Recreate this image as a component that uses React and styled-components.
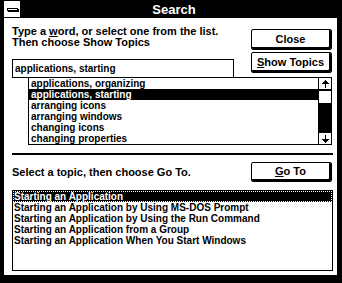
import styled, { createGlobalStyle } from "styled-components";

const GlobalStyle = createGlobalStyle`
  html, body {
    margin: 0;
    padding: 0;
    background: #fff;
  }
  body {
    font-family: "Liberation Sans", Arial, sans-serif;
    -webkit-font-smoothing: none;
  }
`;

const Window = styled.div`
  width: 342px;
  height: 283px;
  box-sizing: border-box;
  background: #000;
  padding: 0 5px 8px 4px;
  display: flex;
  flex-direction: column;
`;

const TitleBar = styled.div`
  height: 18px;
  flex-shrink: 0;
  display: flex;
`;

const SysMenu = styled.div`
  width: 16px;
  margin: 1px 0;
  background: #fff;
  display: flex;
  align-items: center;
  justify-content: center;
`;

const SysDash = styled.div`
  width: 9px;
  height: 1px;
  background: #fff;
  border: 1px solid #000;
  box-shadow: 1px 1px 0 #000;
`;

const Title = styled.div`
  flex: 1;
  color: #fff;
  font-weight: bold;
  font-size: 13px;
  display: flex;
  align-items: center;
  justify-content: center;
  padding-right: 9px;
`;

const Body = styled.div`
  flex: 1;
  background: #fff;
  padding: 8px 4px 0 8px;
  display: flex;
  flex-direction: column;
`;

const TopRow = styled.div`
  display: flex;
  justify-content: space-between;
  align-items: flex-start;
`;

const LeftCol = styled.div`
  width: 222px;
  display: flex;
  flex-direction: column;
`;

const Prompt = styled.div`
  font-size: 11px;
  font-weight: bold;
  line-height: 11px;
  white-space: nowrap;
`;

const Input = styled.div`
  margin-top: 11px;
  height: 19px;
  box-sizing: border-box;
  border: 1px solid #000;
  padding-left: 2px;
  font-size: 10px;
  font-weight: bold;
  line-height: 17px;
`;

const ButtonCol = styled.div`
  margin-top: 3px;
  margin-right: 1px;
  display: flex;
  flex-direction: column;
  gap: 2px;
`;

const Button = styled.div`
  width: 81px;
  height: ${(p) => p.$h || 21}px;
  box-sizing: border-box;
  border: 1px solid #000;
  border-radius: 2px;
  box-shadow: inset -2px -2px 0 #000;
  padding: 0 2px 2px 0;
  display: flex;
  align-items: center;
  justify-content: center;
  font-size: 11px;
  font-weight: bold;
`;

const WordList = styled.div`
  margin: -1px 0 0 16px;
  width: 304px;
  height: 68px;
  box-sizing: border-box;
  border: 1px solid #000;
  display: flex;
`;

const Rows = styled.div`
  flex: 1;
  display: flex;
  flex-direction: column;
`;

const Row = styled.div`
  height: 11px;
  flex-shrink: 0;
  padding-left: 2px;
  font-size: 10px;
  font-weight: bold;
  line-height: 11px;
  white-space: nowrap;
  background: ${(p) => (p.$selected ? "#000" : "#fff")};
  color: ${(p) => (p.$selected ? "#fff" : "#000")};
`;

const TopicRow = styled(Row)`
  padding-left: 1px;
  outline: ${(p) => (p.$focused ? "1px dotted #fff" : "none")};
  outline-offset: -1px;
`;

const ScrollBar = styled.div`
  width: 12px;
  border-left: 1px solid #000;
  display: flex;
  flex-direction: column;
  background: #000;
`;

const Arrow = styled.div`
  height: 11px;
  flex-shrink: 0;
  background: #fff;
  display: flex;
  align-items: center;
  justify-content: center;
  border-${(p) => (p.$down ? "top" : "bottom")}: 1px solid #000;
`;

const Track = styled.div`
  flex: 1;
  background: #000;
`;

const Thumb = styled.div`
  height: 12px;
  margin-top: 1px;
  background: #fff;
`;

const Separator = styled.div`
  margin-top: 8px;
  height: 2px;
  background: #000;
`;

const GoRow = styled.div`
  margin-top: 7px;
  display: flex;
  justify-content: space-between;
  align-items: center;
`;

const TopicList = styled.div`
  margin-top: 8px;
  height: 81px;
  box-sizing: border-box;
  border: 1px solid #000;
  display: flex;
  flex-direction: column;
`;

const ArrowIcon = ({ down }) => (
  <svg width="7" height="8" viewBox="0 0 7 8" style={{ transform: down ? "rotate(180deg)" : "none" }}>
    <path d="M3 0h1v1h1v1h1v1h1v1H4v4H3V4H0V3h1V2h1V1h1z" fill="#000" />
  </svg>
);

const words = [
  "applications, organizing",
  "applications, starting",
  "arranging icons",
  "arranging windows",
  "changing icons",
  "changing properties",
];

const topics = [
  "Starting an Application",
  "Starting an Application by Using MS-DOS Prompt",
  "Starting an Application by Using the Run Command",
  "Starting an Application from a Group",
  "Starting an Application When You Start Windows",
];

export default function App() {
  return (
    <>
      <GlobalStyle />
      <Window>
        <TitleBar>
          <SysMenu>
            <SysDash />
          </SysMenu>
          <Title>Search</Title>
        </TitleBar>
        <Body>
          <TopRow>
            <LeftCol>
              <Prompt>
                Type a <u>w</u>ord, or select one from the list.
                <br />
                Then choose Show Topics
              </Prompt>
              <Input>applications, starting</Input>
            </LeftCol>
            <ButtonCol>
              <Button>Close</Button>
              <Button>
                <span>
                  <u>S</u>how Topics
                </span>
              </Button>
            </ButtonCol>
          </TopRow>
          <WordList>
            <Rows>
              {words.map((w, i) => (
                <Row key={w} $selected={i === 1}>
                  {w}
                </Row>
              ))}
            </Rows>
            <ScrollBar>
              <Arrow>
                <ArrowIcon />
              </Arrow>
              <Track>
                <Thumb />
              </Track>
              <Arrow $down>
                <ArrowIcon down />
              </Arrow>
            </ScrollBar>
          </WordList>
          <Separator />
          <GoRow>
            <Prompt>Select a topic, then choose Go To.</Prompt>
            <ButtonCol style={{ marginTop: 0 }}>
              <Button $h={20}>
                <span>
                  <u>G</u>o To
                </span>
              </Button>
            </ButtonCol>
          </GoRow>
          <TopicList>
            {topics.map((t, i) => (
              <TopicRow key={t} $selected={i === 0} $focused={i === 0}>
                {t}
              </TopicRow>
            ))}
          </TopicList>
        </Body>
      </Window>
    </>
  );
}
